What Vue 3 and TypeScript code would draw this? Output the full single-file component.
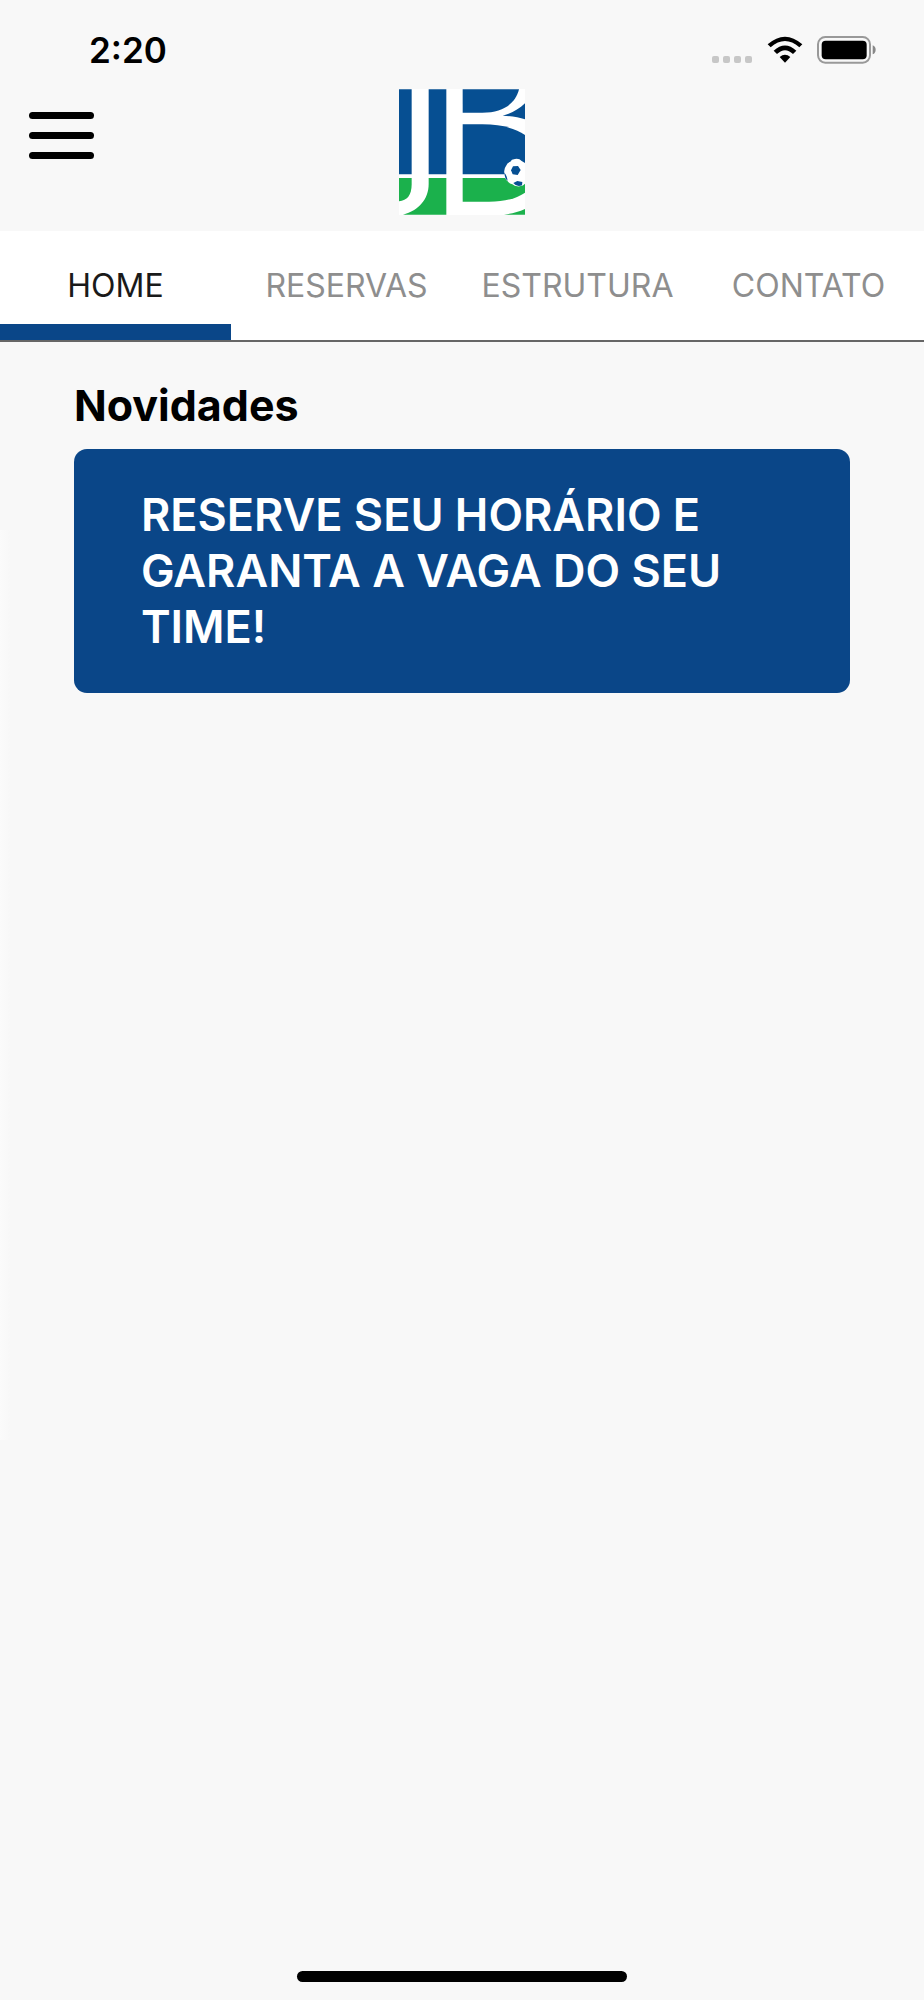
<script setup lang="ts">
import { ref } from 'vue'

const tabs: string[] = ['HOME', 'RESERVAS', 'ESTRUTURA', 'CONTATO']
const active = ref<string>('HOME')
const signalDots = 4
</script>

<template>
  <div class="screen">
    <div class="status">
      <time class="clock">2:20</time>
      <div class="indicators">
        <span class="signal" aria-hidden="true">
          <i v-for="n in signalDots" :key="n" class="dot"></i>
        </span>
        <svg class="wifi" viewBox="0 0 108 84" aria-hidden="true">
          <path d="M2 25Q54-21 106 25L97 34Q54-4 11 34Z" stroke-linejoin="round" />
          <path d="M20 44Q54 13 88 44L78 54Q54 31 30 54Z" stroke-linejoin="round" />
          <path d="M38 63Q54 50 70 63L54 80Z" stroke-linejoin="round" />
        </svg>
        <svg class="battery" viewBox="0 0 177 84" aria-hidden="true">
          <rect x="3" y="3" width="156" height="77" rx="22" fill="none" stroke="#999" stroke-width="6" />
          <rect x="14" y="14" width="135" height="56" rx="12" />
          <path d="M167 28Q176 32 176 41Q176 51 167 55Z" fill="#888" />
        </svg>
      </div>
    </div>

    <header class="topbar">
      <button class="menu" type="button" aria-label="Menu">
        <span class="line"></span>
        <span class="line"></span>
        <span class="line"></span>
      </button>
      <svg class="logo" viewBox="0 0 378 378" role="img" aria-label="JB">
        <rect width="378" height="378" fill="#fff" />
        <g fill="#064f92">
          <path d="M0 1H38V256H0Z" />
          <path d="M89 1H142V256H89Z" />
          <path d="M191 1H360C350 42 314 71 250 71H191Z" />
          <path d="M378 43C358 62 337 73 311 80C338 82 360 85 378 91Z" />
          <path d="M191 106H250C310 106 349 119 378 138V256H191Z" />
        </g>
        <g fill="#1bb14c">
          <path d="M0 267H38V285C38 320 24 334 0 337Z" />
          <path d="M89 267H142V377H12C60 364 89 330 89 285Z" />
          <path d="M191 267H378V311C350 330 316 338 270 338H191Z" />
          <path d="M378 360C358 369 338 374 315 377H378Z" />
        </g>
        <path d="M334 218Q337 211 348 210Q361 208 368 216L378 222V284Q373 291 362 292Q346 293 340 286Q332 284 326 277Q316 270 316 252Q314 240 321 231Q324 222 334 218Z" fill="#fff" />
        <g fill="#064f92">
          <path d="M342 232L357 231L365 243L356 258L341 256L336 244Z" />
          <path d="M316 251Q324 259 326 276Q317 268 316 251Z" />
          <path d="M343 282L355 276L370 279L369 289Q353 295 343 282Z" />
        </g>
      </svg>
    </header>

    <nav class="tabs">
      <button
        v-for="tab in tabs"
        :key="tab"
        type="button"
        class="tab"
        :class="{ active: tab === active }"
        @click="active = tab"
      >
        {{ tab }}
      </button>
    </nav>

    <main class="content">
      <h1 class="title">Novidades</h1>
      <a class="card" href="#reservas">RESERVE SEU HORÁRIO E GARANTA A VAGA DO SEU TIME!</a>
    </main>

    <div class="home-indicator"></div>
  </div>
</template>

<style>
body {
  margin: 0;
  background: #f8f8f8;
}
</style>

<style scoped>
.screen {
  display: flex;
  flex-direction: column;
  min-height: 100vh;
  box-sizing: border-box;
  background: linear-gradient(to right, #fbfbfb, #f8f8f8) no-repeat 0 530px / 10px 910px #f8f8f8;
  color: #000;
  font-family: Inter, "Liberation Sans", sans-serif;
}

.status {
  display: flex;
  justify-content: space-between;
  align-items: center;
  height: 88px;
  padding: 12px 48px 0 89px;
  box-sizing: border-box;
}

.clock {
  font-size: 35px;
  line-height: 40px;
  font-weight: 600;
}

.indicators {
  display: flex;
  align-items: center;
}

.signal {
  display: flex;
  gap: 4px;
  margin: 18px 15px 0 0;
}

.dot {
  width: 7px;
  height: 7px;
  border-radius: 2px;
  background: #c7c7c7;
}

.wifi {
  width: 36px;
  height: 28px;
  margin-right: 14px;
}

.battery {
  width: 59px;
  height: 28px;
}

.topbar {
  display: grid;
  grid-template-columns: 1fr auto 1fr;
  align-items: start;
  height: 143px;
}

.menu {
  display: flex;
  flex-direction: column;
  gap: 13px;
  width: 65px;
  margin: 24px 0 0 29px;
  padding: 0;
  border: 0;
  background: none;
  cursor: pointer;
}

.line {
  width: 100%;
  height: 7px;
  border-radius: 4px;
  background: #000;
}

.logo {
  width: 126px;
  height: 126px;
  margin-top: 1px;
}

.tabs {
  display: grid;
  grid-template-columns: repeat(4, 1fr);
  background: #fff;
  border-bottom: 2px solid #666;
}

.tab {
  height: 109px;
  padding: 16px 0 0;
  border: 0;
  border-bottom: 16px solid transparent;
  background: none;
  color: #8e8e8e;
  font-family: inherit;
  font-size: 32px;
  line-height: 40px;
  font-weight: 400;
  cursor: pointer;
}

.tab.active {
  color: #1a1a1a;
  border-bottom-color: #0a4688;
}

.content {
  flex: 1;
  padding: 35px 8% 0;
}

.title {
  margin: 0 0 16px;
  font-size: 43px;
  line-height: 56px;
  font-weight: 700;
}

.card {
  display: block;
  padding: 38px 67px;
  border-radius: 13px;
  background: #0a4688;
  color: #fff;
  font-size: 45px;
  line-height: 56px;
  font-weight: 600;
  text-decoration: none;
}

.home-indicator {
  width: 330px;
  height: 11px;
  margin: 0 auto 18px;
  border-radius: 6px;
  background: #000;
}
</style>
